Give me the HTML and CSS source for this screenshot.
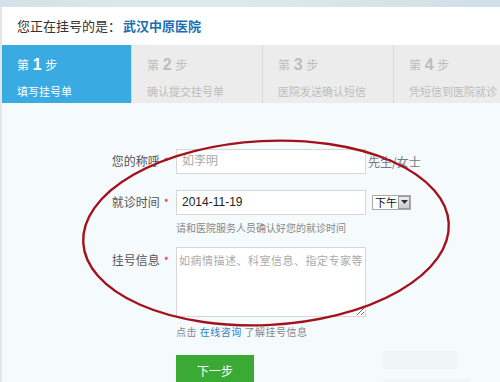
FILE: index.html
```html
<!DOCTYPE html>
<html lang="zh">
<head>
<meta charset="utf-8">
<link rel="stylesheet" href="styles.css">
</head>
<body>
<div class="topbar"></div>
<div class="page">
  <div class="header">您正在挂号的是：<span class="hospital">武汉中原医院</span></div>
  <div class="steps">
    <div class="step active"><div class="step-no">第 <b>1</b> 步</div><div class="step-name">填写挂号单</div></div>
    <div class="step"><div class="step-no">第 <b>2</b> 步</div><div class="step-name">确认提交挂号单</div></div>
    <div class="step"><div class="step-no">第 <b>3</b> 步</div><div class="step-name">医院发送确认短信</div></div>
    <div class="step"><div class="step-no">第 <b>4</b> 步</div><div class="step-name">凭短信到医院就诊</div></div>
  </div>
  <div class="form">
    <div class="row">
      <div class="label">您的称呼<span class="req">*</span></div>
      <div class="field"><input class="input" placeholder="如李明"><span class="suffix">先生/女士</span></div>
    </div>
    <div class="row">
      <div class="label">就诊时间<span class="req">*</span></div>
      <div class="field">
        <input class="input" value="2014-11-19">
        <span class="select"><span class="select-text">下午</span><span class="select-btn"><svg width="7" height="4" viewBox="0 0 7 4"><path d="M0 0H7L3.5 4Z" fill="#333"/></svg></span></span>
      </div>
    </div>
    <div class="row hint-row">
      <div></div>
      <div class="hint">请和医院服务人员确认好您的就诊时间</div>
    </div>
    <div class="row">
      <div class="label">挂号信息<span class="req">*</span></div>
      <div class="field"><textarea class="textarea" wrap="off" placeholder="如病情描述、科室信息、指定专家等"></textarea></div>
    </div>
    <div class="row">
      <div></div>
      <div class="hint consult">点击 <a class="link">在线咨询</a> 了解挂号信息</div>
    </div>
    <div class="row">
      <div></div>
      <div class="actions"><button class="btn">下一步</button><div class="ghosts"><div class="ghost g1"></div><div class="ghost g2"></div></div></div>
    </div>
  </div>
  <svg class="circle" width="500" height="382" viewBox="0 0 500 382">
    <ellipse cx="266" cy="233" rx="183" ry="92" transform="rotate(-3 266 233)" fill="none" stroke="#a3121c" stroke-width="2.4"/>
  </svg>
</div>
</body>
</html>
```
FILE: styles.css
```css
* { box-sizing: border-box; }
body {
  margin: 0;
  width: 500px;
  height: 382px;
  overflow: hidden;
  font-family: "Noto Sans CJK SC", "Liberation Sans", sans-serif;
  background: #f5fafd;
}
.topbar {
  height: 7px;
  background: linear-gradient(90deg, #d3e2e8 0%, #dfeaee 40%, #cfe0e6 100%);
}
.page {
  border-left: 2px solid #e2e6e8;
}
.header {
  height: 38px;
  background: #fff;
  padding-left: 15px;
  font-size: 13px;
  line-height: 37px;
  color: #333;
}
.hospital {
  color: #1b6db3;
  font-weight: bold;
  margin-left: 2px;
}
.steps {
  display: flex;
  height: 58px;
  background: #ececec;
}
.step {
  width: 131px;
  flex: none;
  padding: 10px 0 0 15px;
  color: #bdbdbd;
  border-left: 1px solid #d9d9d9;
  white-space: nowrap;
}
.step.active {
  border-left: none;
  width: 129px;
  background: #3aabe2;
  color: #fff;
}
.step-no {
  font-size: 12px;
  line-height: 20px;
}
.step-no b {
  font-family: "Liberation Sans", sans-serif;
  font-size: 16px;
  margin: 0 1px;
}
.step-name {
  font-size: 11px;
  line-height: 18px;
  margin-top: 7px;
}
.form {
  padding-top: 45px;
  background: #f5fafd;
  display: flex;
  flex-direction: column;
}
.row {
  display: grid;
  grid-template-columns: 174px 1fr;
  margin-bottom: 15px;
}
.label {
  font-size: 12px;
  color: #555;
  line-height: 25px;
  text-align: right;
  padding-right: 7px;
}
.req {
  color: #e0262a;
  margin-left: 4px;
  font-size: 11px;
}
.field {
  display: flex;
  align-items: center;
  gap: 4px;
}
.input {
  width: 190px;
  height: 25px;
  border: 1px solid #d7d7d7;
  background: #fff;
  padding: 0 5px;
  font-family: "Liberation Sans", "Noto Sans CJK SC", sans-serif;
  font-size: 12px;
  color: #222;
  margin: 0;
  outline: none;
}
.input::placeholder, .textarea::placeholder {
  color: #aaa;
  font-family: "Noto Sans CJK SC", sans-serif;
}
.suffix {
  font-size: 12px;
  color: #777;
  margin-left: -2px;
}
.select {
  display: flex;
  align-items: center;
  height: 15px;
  border: 1px solid #a9a9a9;
  background: #fff;
  margin-left: 2px;
}
.select-text {
  font-size: 11px;
  line-height: 13px;
  color: #111;
  padding: 0 1px 0 2px;
}
.select-btn {
  width: 12px;
  height: 13px;
  background: linear-gradient(#eee, #ccc);
  border: 1px solid #999;
  display: flex;
  align-items: center;
  justify-content: center;
}
.hint-row {
  margin-top: -10px;
  margin-bottom: 11px;
}
.hint {
  font-size: 10px;
  color: #888;
  line-height: 16px;
}
.textarea {
  width: 190px;
  height: 70px;
  border: 1px solid #d7d7d7;
  background: #fff;
  resize: both;
  margin: 0;
  padding: 4px 2px;
  font-family: "Noto Sans CJK SC", sans-serif;
  font-size: 11px;
  letter-spacing: 0.5px;
  white-space: nowrap;
  outline: none;
  overflow: hidden;
}
.consult {
  margin-top: -8px;
  letter-spacing: 0.5px;
}
.link {
  color: #2f7fc1;
}
.actions {
  display: flex;
  margin-top: 0;
}
.btn {
  width: 78px;
  height: 30px;
  border: none;
  background: #3aaa35;
  color: #fff;
  font-family: "Noto Sans CJK SC", sans-serif;
  font-size: 12px;
  padding: 0;
  margin: 0;
}
.ghosts {
  margin-left: 129px;
  margin-top: -4px;
  display: flex;
  flex-direction: column;
  gap: 10px;
}
.ghost {
  height: 18px;
  background: #f0f5f8;
}
.g1 { width: 74px; }
.g2 { width: 87px; }
.circle {
  position: absolute;
  left: 0;
  top: 0;
  pointer-events: none;
}
```
